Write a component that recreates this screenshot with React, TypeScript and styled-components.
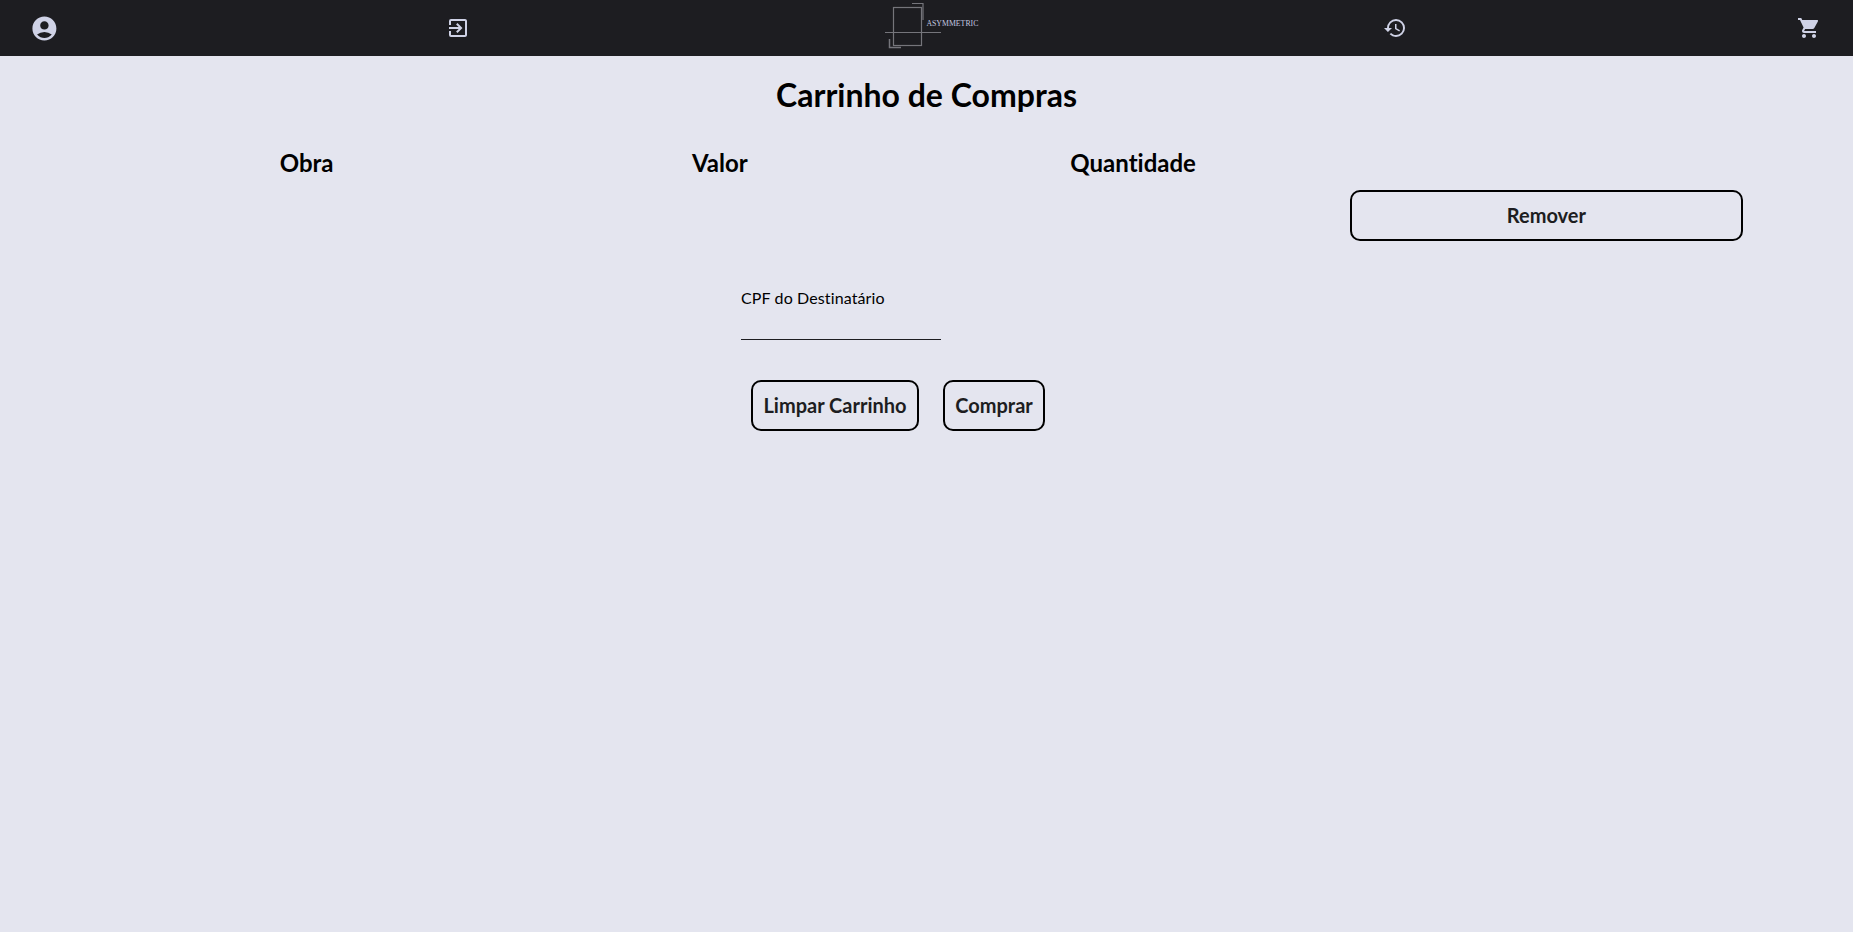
import React from "react";
import styled, { createGlobalStyle } from "styled-components";
import { MdAccountCircle, MdExitToApp, MdHistory, MdShoppingCart } from "react-icons/md";

const Global = createGlobalStyle`
  html, body { margin: 0; padding: 0; height: 100%; background: #e4e5ef; }
  body { font-family: "Lato", "Open Sans", sans-serif; color: #000; font-variant-ligatures: none; }
  #root { min-height: 100%; }
  * { box-sizing: border-box; }
`;

const Page = styled.div`
  min-height: 932px;
  background: #e4e5ef;
`;

const Header = styled.header`
  height: 56px;
  background: #1d1d21;
  display: flex;
  align-items: center;
  gap: 387.6px;
  padding: 0 32px 0 29.6px;
  color: #cfd2e6;
`;

const IconLink = styled.a<{ $size: number; $end?: boolean }>`
  display: flex;
  flex: none;
  width: ${(p) => p.$size}px;
  height: ${(p) => p.$size}px;
  margin-left: ${(p) => (p.$end ? "auto" : "0")};
  color: inherit;
  svg { width: 100%; height: 100%; display: block; }
`;

const Logo = styled.svg`
  flex: none;
  width: 138px;
  height: 56px;
  display: block;
`;

const Main = styled.main`
  display: flex;
  flex-direction: column;
  align-items: center;
`;

const Title = styled.h1`
  margin: 17px 0 0;
  font-size: 32px;
  line-height: 44px;
  font-weight: 700;
  text-align: center;
`;

const CartGrid = styled.div`
  width: 100%;
  padding: 0 100px;
  margin-top: 30px;
  display: grid;
  grid-template-columns: repeat(4, 1fr);
  justify-items: center;
`;

const ColumnHead = styled.h2`
  margin: 0;
  font-size: 24px;
  line-height: 32px;
  font-weight: 700;
`;

const ActionCell = styled.div`
  grid-column: 4;
  grid-row: 2;
  width: 100%;
  padding: 0 10px;
  margin-top: 11px;
`;

const OutlineButton = styled.button<{ $wide?: boolean; $width?: number }>`
  height: 51px;
  width: ${(p) => (p.$wide ? "100%" : `${p.$width}px`)};
  padding: 0 0 2px;
  background: transparent;
  border: 2px solid #000;
  border-radius: 10px;
  font-family: inherit;
  font-variant-ligatures: none;
  font-size: 20px;
  font-weight: 700;
  color: #1d1d21;
`;

const Form = styled.div`
  display: flex;
  flex-direction: column;
  width: 314px;
  margin: 46px 57px 0 0;
`;

const FieldLabel = styled.label`
  font-size: 16px;
  line-height: 22px;
  letter-spacing: 0.12px;
`;

const FieldInput = styled.input`
  display: block;
  width: 200px;
  height: 31px;
  padding: 0;
  border: 0;
  border-bottom: 1px solid #1d1d21;
  background: transparent;
  outline: none;
`;

const Actions = styled.div`
  display: flex;
  gap: 24px;
  padding-left: 10px;
  margin-top: 40px;
`;

export default function App() {
  return (
    <Page>
      <Global />
      <Header>
        <IconLink $size={28.8}><MdAccountCircle /></IconLink>
        <IconLink $size={24}><MdExitToApp /></IconLink>
        <Logo viewBox="0 0 138 56" fill="none">
          <g stroke="#75757b" strokeWidth="1.2">
            <rect x="35.5" y="7.5" width="28" height="38" />
            <path d="M54 3.5H65V20" />
            <path d="M31.5 39V47.5H43" strokeWidth="1.5" />
            <path d="M27 32.5H83" />
          </g>
          <text x="68.4" y="26" fontFamily="Liberation Serif, serif" fontSize="7.8" fill="#c4c8e0">ASYMMETRIC</text>
        </Logo>
        <IconLink $size={24}><MdHistory /></IconLink>
        <IconLink $size={24} $end><MdShoppingCart /></IconLink>
      </Header>
      <Main>
        <Title>Carrinho de Compras</Title>
        <CartGrid>
          <ColumnHead>Obra</ColumnHead>
          <ColumnHead>Valor</ColumnHead>
          <ColumnHead>Quantidade</ColumnHead>
          <ActionCell><OutlineButton $wide>Remover</OutlineButton></ActionCell>
        </CartGrid>
        <Form>
          <FieldLabel>CPF do Destinatário</FieldLabel>
          <FieldInput />
          <Actions>
            <OutlineButton $width={168}>Limpar Carrinho</OutlineButton>
            <OutlineButton $width={102}>Comprar</OutlineButton>
          </Actions>
        </Form>
      </Main>
    </Page>
  );
}
